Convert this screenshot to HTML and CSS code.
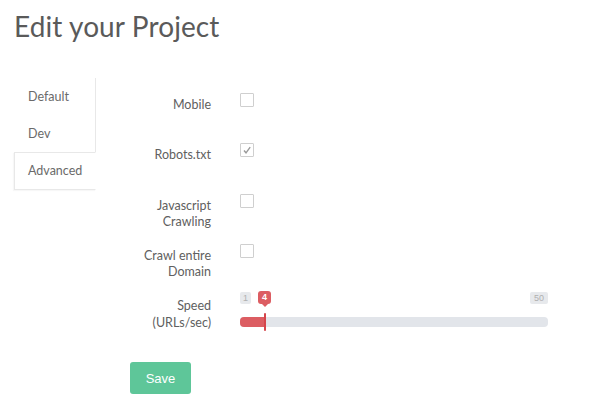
FILE: index.html
```html
<!DOCTYPE html>
<html>
<head>
<meta charset="utf-8">
<link rel="stylesheet" href="styles.css">
</head>
<body>
<h1 class="title">Edit your Project</h1>
<div class="layout">
  <ul class="tabs">
    <li class="tab">Default</li>
    <li class="tab">Dev</li>
    <li class="tab active">Advanced</li>
  </ul>
  <form class="form">
    <div class="row">
      <div class="label">Mobile</div>
      <div class="control"><span class="box"></span></div>
    </div>
    <div class="row">
      <div class="label">Robots.txt</div>
      <div class="control"><span class="box checked"><svg viewBox="0 0 14 14" width="14" height="14"><path d="M4 7.5 L6 9.8 L10.2 4.2" fill="none" stroke="#9a9a9a" stroke-width="1.4"/></svg></span></div>
    </div>
    <div class="row">
      <div class="label">Javascript<br>Crawling</div>
      <div class="control"><span class="box"></span></div>
    </div>
    <div class="row">
      <div class="label">Crawl entire<br>Domain</div>
      <div class="control"><span class="box"></span></div>
    </div>
    <div class="row speed">
      <div class="label">Speed<br>(URLs/sec)</div>
      <div class="control slider">
        <div class="ticks">
          <span class="tick">1</span>
          <span class="tick">50</span>
          <span class="bubble" style="left:18px">4</span>
        </div>
        <div class="track">
          <div class="fill" style="width:25px"></div>
          <div class="handle" style="left:24px"></div>
        </div>
      </div>
    </div>
    <div class="actions">
      <button type="button" class="save">Save</button>
    </div>
  </form>
</div>
</body>
</html>
```
FILE: styles.css
```css
html, body {
  margin: 0;
  padding: 0;
  background: #fff;
}
body {
  font-family: Lato, "Open Sans", sans-serif;
  color: #555;
  width: 600px;
  height: 407px;
  overflow: hidden;
}
.title {
  margin: 0;
  padding: 9px 0 0 14px;
  font-size: 28px;
  line-height: 34px;
  font-weight: 400;
  color: #5a5a5a;
  letter-spacing: 0.1px;
}
.layout {
  display: flex;
  margin-top: 35px;
  padding-left: 14px;
}
.tabs {
  list-style: none;
  margin: 0;
  padding: 0;
  width: 82px;
  border-right: 1px solid #e8e8e8;
  align-self: flex-start;
  box-sizing: border-box;
}
.tab {
  height: 37px;
  line-height: 37px;
  padding-left: 14px;
  font-size: 12.5px;
  color: #6a6a6a;
  box-sizing: border-box;
}
.tab.active {
  height: 38px;
  border: 1px solid #e8e8e8;
  border-right-color: #fff;
  margin-right: -1px;
  padding-left: 13px;
  line-height: 36px;
  box-shadow: -1px 1px 1px rgba(0,0,0,0.03);
}
.form {
  margin: 15px 0 0 0;
  display: flex;
  flex-direction: column;
}
.row {
  display: flex;
  height: 50px;
}
.row:nth-child(2) { height: 51px; }
.label {
  width: 115px;
  text-align: right;
  font-size: 12.5px;
  line-height: 16px;
  padding-top: 4px;
  color: #606060;
}
.control {
  margin-left: 29px;
}
.box {
  display: block;
  width: 14px;
  height: 14px;
  box-sizing: border-box;
  border: 1px solid #cfcfcf;
  border-radius: 1px;
  background: #fff;
}
.box svg {
  display: block;
  margin: -1px;
}
.speed .label { line-height: 17px; padding-top: 3px; }
.slider {
  width: 308px;
  position: relative;
}
.ticks {
  position: relative;
  height: 23px;
  display: flex;
  justify-content: space-between;
  align-items: flex-start;
}
.tick {
  display: block;
  background: #e7e9ec;
  color: #b0b0b0;
  font-family: "Liberation Sans", Arial, sans-serif;
  font-size: 9px;
  line-height: 12px;
  padding: 0 3px;
  border-radius: 2px;
  margin-top: -2px;
}
.tick:nth-child(2) { padding: 0 4px; }
.bubble {
  position: absolute;
  top: -3px;
  background: #dc5d62;
  color: #fff;
  font-family: "Liberation Sans", Arial, sans-serif;
  font-size: 9px;
  font-weight: bold;
  line-height: 13px;
  width: 13px;
  text-align: center;
  border-radius: 3px;
}
.bubble::after {
  content: "";
  position: absolute;
  left: 50%;
  margin-left: -3px;
  bottom: -3px;
  border-left: 3px solid transparent;
  border-right: 3px solid transparent;
  border-top: 3px solid #dc5d62;
}
.track {
  position: relative;
  height: 10px;
  background: #e2e5ea;
  border-radius: 4px;
}
.fill {
  position: absolute;
  left: 0;
  top: 0;
  bottom: 0;
  background: #dc5d62;
  border-radius: 4px 0 0 4px;
}
.handle {
  position: absolute;
  top: -4px;
  width: 2px;
  height: 18px;
  background: #d5454b;
  border-radius: 1px;
}
.actions {
  padding-left: 34px;
  margin-top: 18px;
}
.save {
  width: 61px;
  height: 32px;
  border: none;
  border-radius: 3px;
  background: #5ec699;
  color: #fff;
  font-family: "Liberation Sans", Arial, sans-serif;
  font-size: 13px;
  padding: 0;
}
```
